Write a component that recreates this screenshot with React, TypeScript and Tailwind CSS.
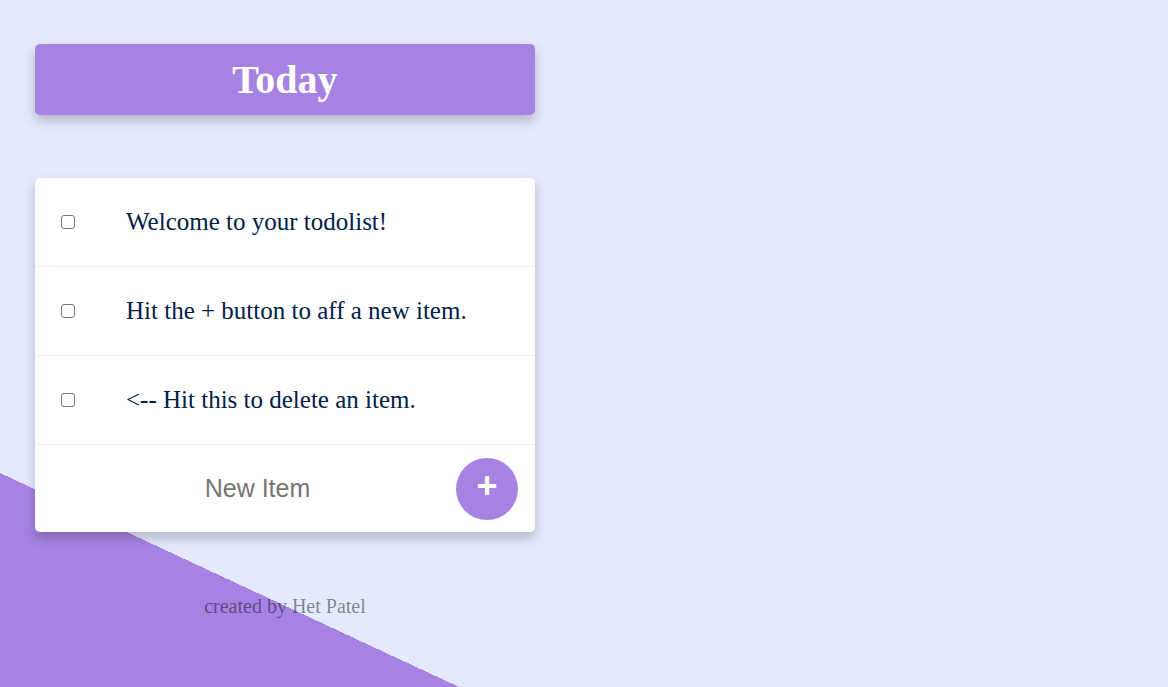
import { useState } from 'react';

const initialItems = [
  'Welcome to your todolist!',
  'Hit the + button to aff a new item.',
  '<-- Hit this to delete an item.',
];

export default function App() {
  const [items, setItems] = useState(initialItems);
  const [newItem, setNewItem] = useState('');

  const addItem = (e: React.FormEvent) => {
    e.preventDefault();
    if (!newItem.trim()) return;
    setItems([...items, newItem]);
    setNewItem('');
  };

  return (
    <div className="h-[687px] w-full overflow-hidden bg-[linear-gradient(25deg,#A683E3_194px,#E4E9FD_194px)] font-['Liberation_Serif',serif]">
      <div className="w-[500px] ml-[35px] pt-[44px]">
        <div className="h-[71px] bg-[#A683E3] rounded-[5px] shadow-[0_6px_12px_rgba(0,0,0,0.22)] flex items-center justify-center">
          <h1 className="text-white font-bold text-[40px] leading-none">Today</h1>
        </div>

        <div className="mt-[63px] bg-white rounded-[5px] shadow-[0_6px_12px_rgba(0,0,0,0.22)]">
          {items.map((item, i) => (
            <div key={i} className="h-[89px] flex items-center border-b border-[#F1F1F1]">
              <input type="checkbox" className="ml-[26px] w-[14px] h-[14px] mb-[1px] appearance-none rounded-[3px] border border-[#767676] bg-white" />
              <p className="ml-[51px] text-[25px] text-[#00204a] leading-none mb-[2px]">{item}</p>
            </div>
          ))}
          <form onSubmit={addItem} className="h-[87px] flex items-center">
            <input
              type="text"
              value={newItem}
              onChange={e => setNewItem(e.target.value)}
              placeholder="New Item"
              autoComplete="off"
              className="ml-[27px] w-[391px] h-[60px] text-center text-[25px] font-['Liberation_Sans',sans-serif] text-[#00204a] placeholder:text-[#757575] outline-none"
            />
            <button
              type="submit"
              className="ml-[3px] w-[62px] h-[62px] rounded-full bg-[#A683E3] text-white font-['Liberation_Sans',sans-serif] font-bold text-[36px] leading-none flex items-center justify-center pb-[6px]"
            >
              +
            </button>
          </form>
        </div>

        <footer className="mt-[59px] text-center text-[20px] text-[rgba(0,0,0,0.45)]">
          created by Het Patel
        </footer>
      </div>
    </div>
  );
}
